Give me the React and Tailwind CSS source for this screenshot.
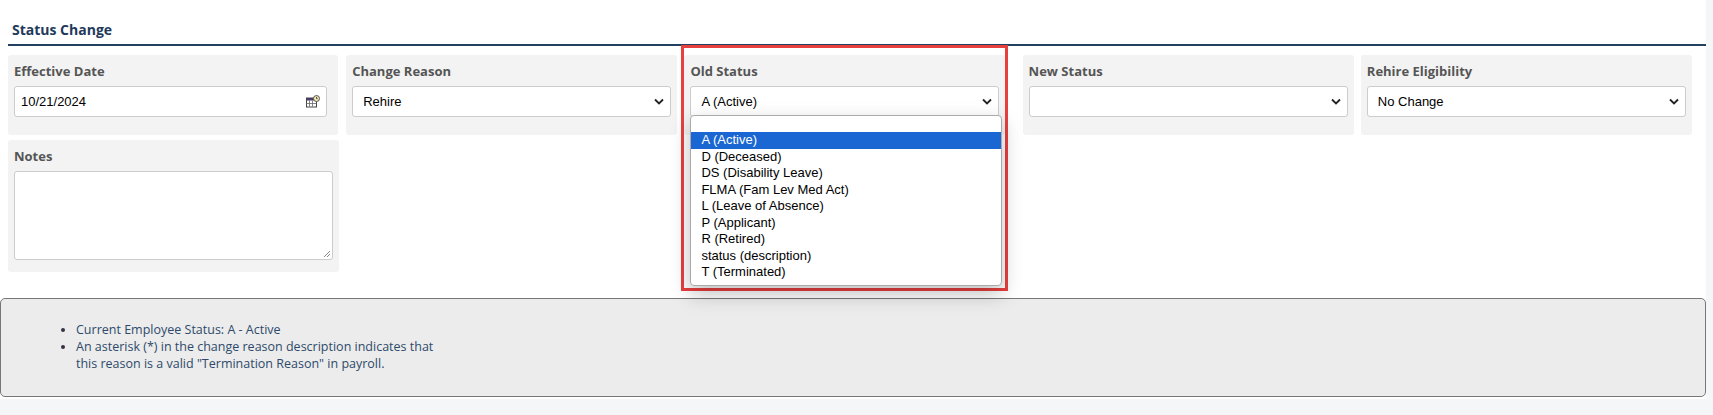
export default function App() {
  const opts = ["A (Active)","D (Deceased)","DS (Disability Leave)","FLMA (Fam Lev Med Act)","L (Leave of Absence)","P (Applicant)","R (Retired)","status (description)","T (Terminated)"];
  const Chev = () => (
    <svg width="10" height="7" viewBox="0 0 10 7" className="shrink-0"><path d="M1 1.5l4 4 4-4" fill="none" stroke="#222" strokeWidth="1.8"/></svg>
  );
  const Sel = ({v}) => (
    <div className="h-[31px] bg-white border border-[#ccc] rounded-[3px] flex items-center justify-between pl-[10px] pr-[6px] text-[13px] text-black" style={{fontFamily:'"Liberation Sans",Arial,sans-serif'}}>
      <span>{v}</span><Chev/>
    </div>
  );
  const Label = ({t}) => <div className="text-[13px] font-bold text-[#555] mb-[6px] leading-[18px]">{t}</div>;
  return (
    <div className="w-[1713px] h-[415px] bg-[#f5f6f8] overflow-hidden" style={{fontFamily:'"Open Sans",sans-serif'}}>
      <div className="w-[1706px] h-[399px] bg-white pl-[8px] pt-[20px] relative">
        <div className="text-[14px] font-bold text-[#1f3a5a] pl-[4px] leading-[19px]">Status Change</div>
        <div className="h-[2px] bg-[#22405f] mt-[5px] mr-0"></div>
        <div className="grid grid-cols-5 gap-x-[7px] gap-y-[5px] mt-[9px] w-[1684px]">
          <div className="bg-[#f3f3f3] rounded-[3px] h-[80px] px-[6px] pt-[7px] mr-[1px]">
            <Label t="Effective Date"/>
            <div className="h-[31px] w-[313px] bg-white border border-[#ccc] rounded-[3px] flex items-center justify-between pl-[6px] pr-[6px] text-[13px] text-black" style={{fontFamily:'"Liberation Sans",Arial,sans-serif'}}>
              <span>10/21/2024</span>
              <svg width="14" height="13" viewBox="0 0 14 13"><rect x="0.5" y="3" width="10" height="9" fill="#fff" stroke="#444"/><rect x="0.5" y="3" width="10" height="2.5" fill="#4a3b6b"/><path d="M3.5 5.5v6M6.5 5.5v6M0.5 8.5h10" stroke="#666" strokeWidth="0.8"/><circle cx="10.5" cy="3.5" r="3" fill="#f2e7b0" stroke="#555"/><path d="M10.5 1.8v1.8h1.2" stroke="#333" strokeWidth="0.8" fill="none"/></svg>
            </div>
          </div>
          <div className="bg-[#f3f3f3] rounded-[3px] h-[80px] px-[6px] pt-[7px]"><Label t="Change Reason"/><Sel v="Rehire"/></div>
          <div className="relative">
            <div className="absolute left-[-3px] right-[8px] top-[-10px] h-[246px] border-[3px] border-[#e8403f] z-0"></div>
            <div className="relative bg-[#f3f3f3] rounded-[3px] h-[80px] px-[6px] pt-[7px] mr-[11px] z-10"><Label t="Old Status"/><Sel v="A (Active)"/></div>
            <div className="absolute left-[6px] right-[14px] top-[60px] z-20 bg-white border border-[#aaa] rounded-[4px] shadow-[0_8px_20px_rgba(0,0,0,0.25)] text-[13px] text-black leading-[16.5px] pt-[16px] pb-[4px]" style={{fontFamily:'"Liberation Sans",Arial,sans-serif'}}>
              {opts.map((o,i)=>(
                <div key={o} className={i===0?"bg-[#1a66d2] text-white pl-[10px]":"pl-[10px]"}>{o}</div>
              ))}
            </div>
          </div>
          <div className="bg-[#f3f3f3] rounded-[3px] h-[80px] px-[6px] pt-[7px]"><Label t="New Status"/><Sel v=""/></div>
          <div className="bg-[#f3f3f3] rounded-[3px] h-[80px] px-[6px] pt-[7px]"><Label t="Rehire Eligibility"/><Sel v="No Change"/></div>
          <div className="bg-[#f3f3f3] rounded-[3px] h-[132px] px-[6px] pt-[7px]">
            <Label t="Notes"/>
            <div className="h-[89px] bg-white border border-[#ccc] rounded-[3px] relative">
              <svg className="absolute right-[1px] bottom-[1px]" width="8" height="8" viewBox="0 0 8 8"><path d="M7 1L1 7M7 4L4 7" stroke="#888" strokeWidth="1"/></svg>
            </div>
          </div>
        </div>
        <div className="absolute left-0 top-[298px] w-[1706px] h-[99px] bg-[#ececec] border border-[#777] rounded-[5px] pt-[22px] pl-[57px] text-[12.5px] text-[#2d4a6a] leading-[17px]">
          <ul className="list-disc pl-[18px] marker:text-[#334]">
            <li>Current Employee Status: A - Active</li>
            <li>An asterisk (*) in the change reason description indicates that<br/>this reason is a valid "Termination Reason" in payroll.</li>
          </ul>
        </div>
      </div>
    </div>
  );
}
